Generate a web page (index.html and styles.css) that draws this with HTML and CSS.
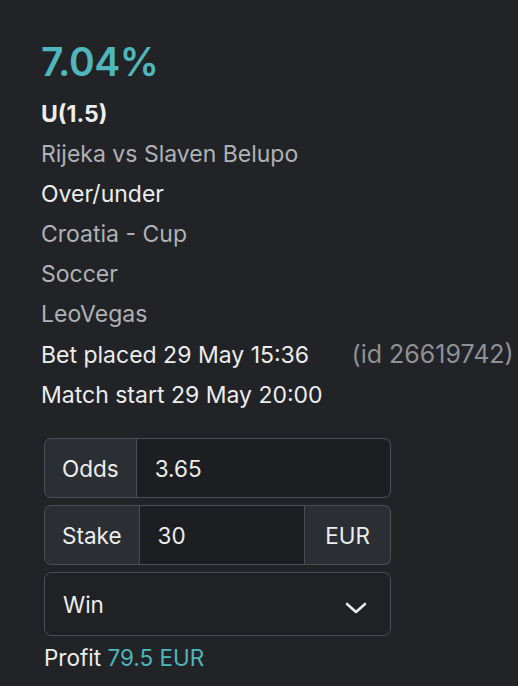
FILE: index.html
```html
<!DOCTYPE html>
<html lang="en">
<head>
    <meta charset="UTF-8">
    <meta name="viewport" content="width=device-width, initial-scale=1.0">
    <title>Bet details</title>
    <link rel="stylesheet" href="styles.css">
</head>
<body>
    <div class="bet-card">
        <div class="edge">7.04%</div>
        <div class="selection">U(1.5)</div>
        <div class="line muted">Rijeka vs Slaven Belupo</div>
        <div class="line">Over/under</div>
        <div class="line muted">Croatia - Cup</div>
        <div class="line muted">Soccer</div>
        <div class="line muted">LeoVegas</div>
        <div class="line placed">Bet placed 29 May 15:36 <span class="bet-id">(id 26619742)</span></div>
        <div class="line">Match start 29 May 20:00</div>

        <form class="bet-form">
            <div class="input-group">
                <span class="addon">Odds</span>
                <input class="field" type="text" value="3.65">
            </div>
            <div class="input-group">
                <span class="addon">Stake</span>
                <input class="field field-mid" type="text" value="30">
                <span class="addon addon-end">EUR</span>
            </div>
            <div class="select">
                <span>Win</span>
                <svg class="chevron" width="24" height="14" viewBox="0 0 24 14">
                    <path d="M3 3 L12 11 L21 3" fill="none" stroke="#e8e9ea" stroke-width="2.6" stroke-linecap="round" stroke-linejoin="round"/>
                </svg>
            </div>
        </form>

        <div class="profit">Profit <span class="accent">79.5 EUR</span></div>
    </div>
</body>
</html>
```

FILE: styles.css
```css
body {
    margin: 0;
    background: #212327;
    font-family: Inter, "Noto Sans", sans-serif;
    color: #eceded;
    overflow: hidden;
}
.bet-card {
    padding: 34px 0 20px 41px;
    white-space: nowrap;
}
.edge {
    font-size: 39px;
    font-weight: 600;
    color: #4fb6bb;
    letter-spacing: -0.5px;
    line-height: 56px;
}
.selection {
    font-size: 23px;
    font-weight: 700;
    line-height: 40px;
    margin-top: 4px;
}
.line {
    font-size: 23px;
    line-height: 40px;
}
.muted {
    color: #afb2b6;
}
.bet-id {
    color: #8e9196;
    font-size: 25px;
    margin-left: 36px;
}
.bet-form {
    margin: 23px 0 0 3px;
    width: 347px;
    display: flex;
    flex-direction: column;
    gap: 7px;
}
.input-group {
    display: flex;
    height: 60px;
}
.addon {
    display: flex;
    align-items: center;
    padding: 0 17px;
    background: #2b2e33;
    border: 1.5px solid #4b4f55;
    border-radius: 7px 0 0 7px;
    font-size: 22.5px;
}
.addon-end {
    padding: 0 20px;
    border-radius: 0 7px 7px 0;
    border-left: none;
}
.field {
    flex: 1;
    min-width: 0;
    background: #1c1e21;
    border: 1.5px solid #4b4f55;
    border-left: none;
    border-radius: 0 7px 7px 0;
    color: #eceded;
    font-family: inherit;
    font-size: 22.5px;
    padding: 0 18px;
    outline: none;
}
.field-mid {
    border-radius: 0;
}
.select {
    display: flex;
    align-items: center;
    justify-content: space-between;
    height: 62px;
    padding: 0 22px 0 18px;
    background: #1f2125;
    border: 1.5px solid #4b4f55;
    border-radius: 7px;
    font-size: 22.5px;
}
.chevron {
    margin-top: 8px;
}
.profit {
    margin: 7px 0 0 3px;
    font-size: 22.5px;
    line-height: 30px;
}
.accent {
    color: #4fb6bb;
}
```
